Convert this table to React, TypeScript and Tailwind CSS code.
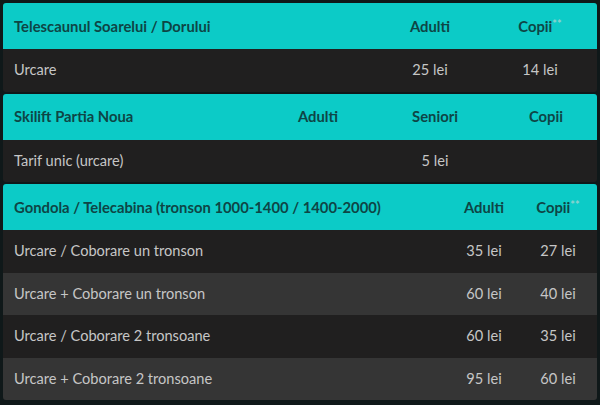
import React from "react"

type Table = {
  cols: string
  heads: string[]
  stars: boolean
  rows: string[][]
}

const tables: Table[] = [
  {
    cols: "grid-cols-[374px_106px_1fr]",
    heads: ["Telescaunul Soarelui / Dorului", "Adulti", "Copii"],
    stars: true,
    rows: [["Urcare", "25 lei", "14 lei"]],
  },
  {
    cols: "grid-cols-[258px_114px_120px_1fr]",
    heads: ["Skilift Partia Noua", "Adulti", "Seniori", "Copii"],
    stars: false,
    rows: [["Tarif unic (urcare)", "", "5 lei", ""]],
  },
  {
    cols: "grid-cols-[446px_70px_1fr]",
    heads: ["Gondola / Telecabina (tronson 1000-1400 / 1400-2000)", "Adulti", "Copii"],
    stars: true,
    rows: [
      ["Urcare / Coborare un tronson", "35 lei", "27 lei"],
      ["Urcare + Coborare un tronson", "60 lei", "40 lei"],
      ["Urcare / Coborare 2 tronsoane", "60 lei", "35 lei"],
      ["Urcare + Coborare 2 tronsoane", "95 lei", "60 lei"],
    ],
  },
]

function PriceTable({ table }: { table: Table }) {
  const last = table.heads.length - 1
  return (
    <div className="rounded-[3px] overflow-hidden">
      <div className={`grid ${table.cols} h-[46px] items-center bg-[#0ccbc7] text-[#0e4545] text-[14.8px] font-bold`}>
        {table.heads.map((h, i) => (
          <div key={i} className={i === 0 ? "pl-[11px] whitespace-nowrap" : "text-center whitespace-nowrap"}>
            {h}
            {table.stars && i === last && (
              <span className="relative -top-[4px] text-[11px] text-[#8fd3cf]">**</span>
            )}
          </div>
        ))}
      </div>
      {table.rows.map((r, ri) => (
        <div
          key={ri}
          className={`grid ${table.cols} h-[42.5px] items-center text-[14.6px] text-[#c6c6c6] ${
            ri % 2 === 0 ? "bg-[#201f1f]" : "bg-[#353535]"
          }`}
        >
          {r.map((c, ci) => (
            <div key={ci} className={ci === 0 ? "pl-[11px] whitespace-nowrap" : "text-center whitespace-nowrap"}>
              {c}
            </div>
          ))}
        </div>
      ))}
    </div>
  )
}

export default function App() {
  return (
    <div className="w-[600px] h-[405px] bg-[#0f1819] px-[3px] pt-[3px] flex flex-col gap-[2px] font-['Lato',sans-serif]">
      {tables.map((t, i) => (
        <PriceTable key={i} table={t} />
      ))}
    </div>
  )
}
